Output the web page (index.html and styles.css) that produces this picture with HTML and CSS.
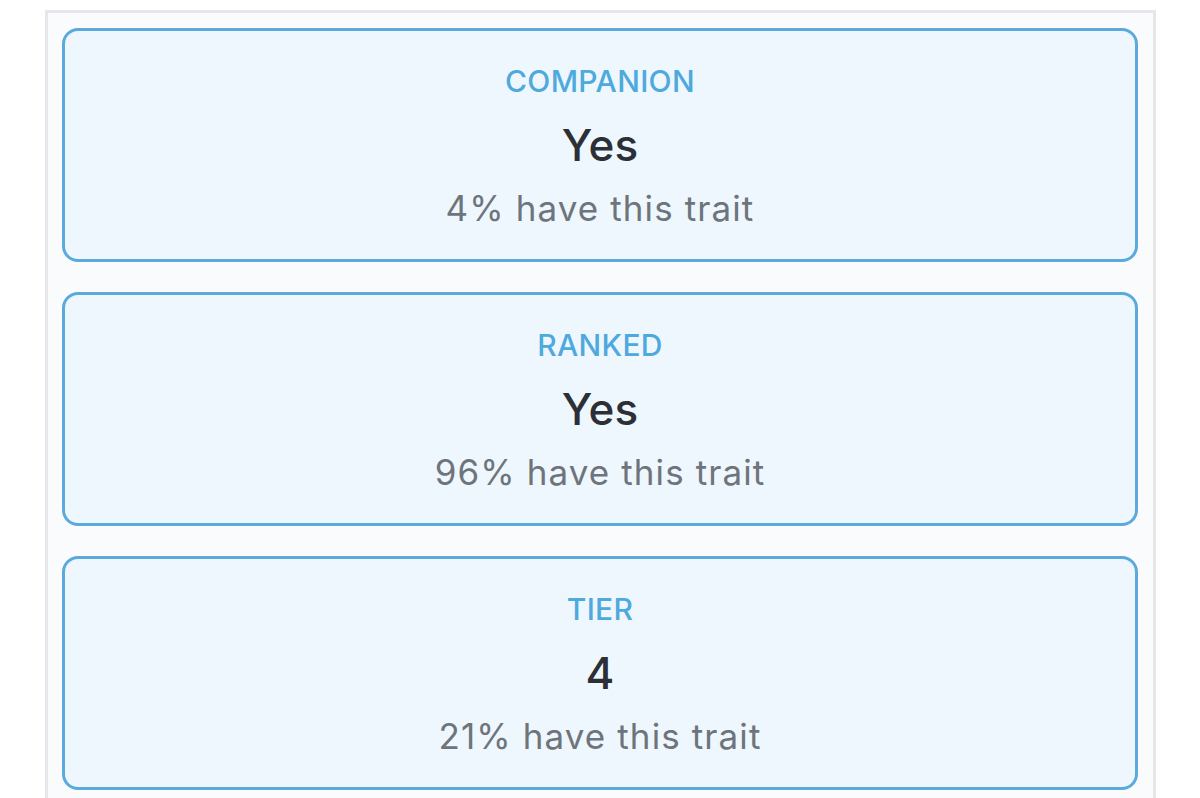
FILE: index.html
```html
<!DOCTYPE html>
<html lang="en">
<head>
<meta charset="utf-8">
<title>Traits</title>
<link rel="stylesheet" href="styles.css">
</head>
<body>
  <div class="panel">
    <div class="trait">
      <div class="trait-label">COMPANION</div>
      <div class="trait-value">Yes</div>
      <div class="trait-rarity">4% have this trait</div>
    </div>
    <div class="trait">
      <div class="trait-label">RANKED</div>
      <div class="trait-value">Yes</div>
      <div class="trait-rarity">96% have this trait</div>
    </div>
    <div class="trait">
      <div class="trait-label">TIER</div>
      <div class="trait-value">4</div>
      <div class="trait-rarity">21% have this trait</div>
    </div>
  </div>
</body>
</html>
```

FILE: styles.css
```css
html, body {
  margin: 0;
  padding: 0;
  background: #ffffff;
}

body {
  font-family: "Inter", "Noto Sans", "Liberation Sans", sans-serif;
  height: 798px;
  overflow: hidden;
}

.panel {
  margin-top: 10px;
  margin-left: 45px;
  width: 1076px;
  border-top: 3px solid #e6e7ea;
  border-left: 3px solid #e6e7ea;
  border-right: 3px solid #e6e7ea;
  background: #f9fbfd;
  padding: 15px 15px 40px 14px;
  display: flex;
  flex-direction: column;
  gap: 30px;
  box-sizing: content-box;
}

.trait {
  border: 3px solid #5aaade;
  border-radius: 16px;
  background: #eef7fd;
  display: flex;
  flex-direction: column;
  align-items: center;
  padding-top: 32px;
  box-sizing: content-box;
  height: 196px;
}

.trait-label {
  color: #4ea9dd;
  font-size: 30px;
  line-height: 36px;
  font-weight: 500;
  letter-spacing: 0.3px;
}

.trait-value {
  color: #2c2f35;
  font-size: 44px;
  line-height: 52px;
  font-weight: 500;
  margin-top: 20px;
}

.trait-rarity {
  color: #6e747c;
  font-size: 35px;
  line-height: 42px;
  font-weight: 400;
  letter-spacing: 1.1px;
  margin-top: 16px;
}
```
